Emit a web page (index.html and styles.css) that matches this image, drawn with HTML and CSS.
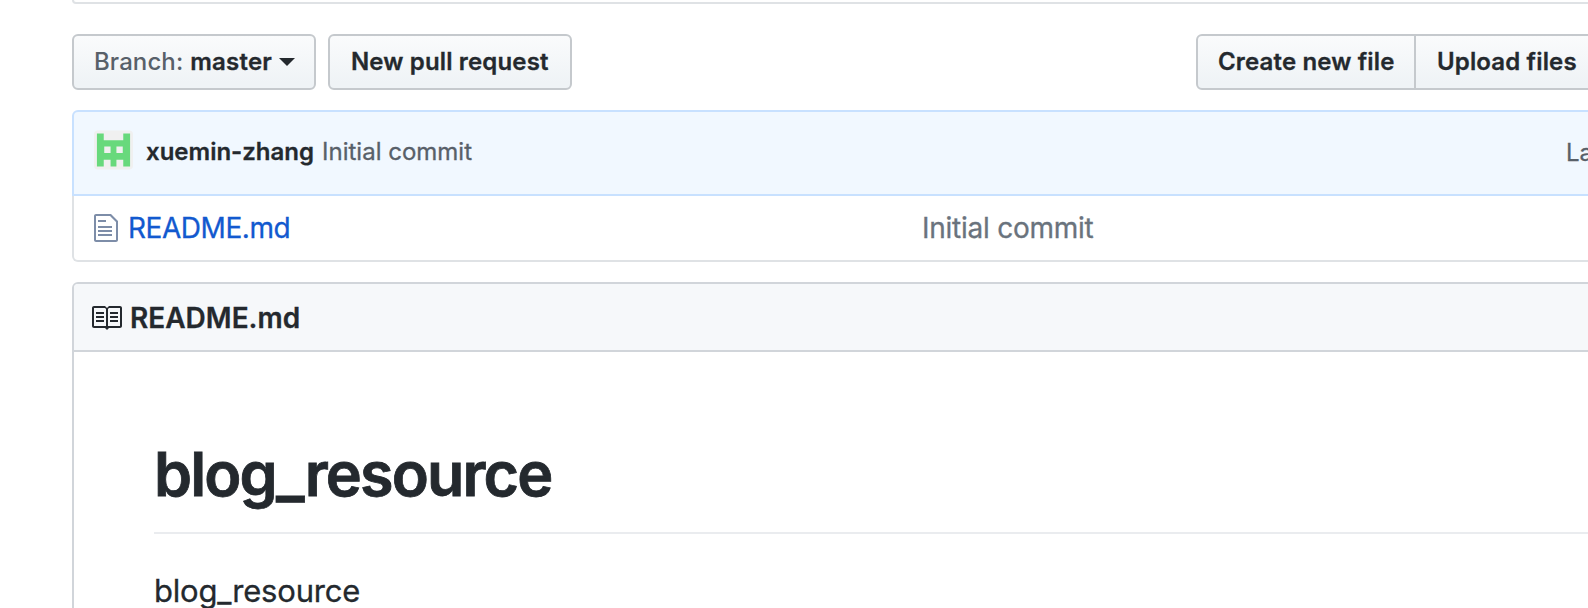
FILE: index.html
```html
<!DOCTYPE html>
<html lang="en">
<head>
<meta charset="utf-8">
<title>blog_resource</title>
<link rel="stylesheet" href="styles.css">
</head>
<body>
<main class="repo">
  <div class="summary"></div>
  <div class="toolbar">
    <button class="btn branch"><span class="label">Branch:</span><span class="name">master</span><span class="caret"></span></button>
    <button class="btn pull"><span>New pull request</span></button>
    <div class="group">
      <button class="btn create"><span>Create new file</span></button>
      <button class="btn upload"><span>Upload files</span></button>
    </div>
  </div>
  <section class="files">
    <div class="commit">
      <svg class="avatar" viewBox="0 0 40 40">
        <rect width="40" height="40" rx="4" fill="#f0f0f0"/>
        <path fill="#68d97c" fill-rule="evenodd" d="M3 3h7v7h20V3h7v34h-7v-7h-7v7h-6v-7h-7v7H3zM10.500 16.500v6.500h6.500v-6.500zM23 16.500v6.500h6.500v-6.500z"/>
      </svg>
      <span class="author">xuemin-zhang</span>
      <span class="message">Initial commit</span>
      <span class="latest">La</span>
    </div>
    <div class="file">
      <svg class="file-icon" viewBox="0 0 12 16"><path d="M6 5H2V4h4v1zM2 8h7V7H2v1zm0 2h7V9H2v1zm0 2h7v-1H2v1zm10-7.5V14c0 .55-.45 1-1 1H1c-.55 0-1-.45-1-1V2c0-.55.45-1 1-1h7.500L12 4.500zM11 5L8 2H1v12h10V5z"/></svg>
      <a class="file-name">README.md</a>
      <span class="file-message">Initial commit</span>
    </div>
  </section>
  <section class="readme">
    <div class="readme-head">
      <svg class="book-icon" viewBox="0 0 16 16"><path d="M3 5h4v1H3V5zm0 3h4V7H3v1zm0 2h4V9H3v1zm11-5h-4v1h4V5zm0 2h-4v1h4V7zm0 2h-4v1h4V9zm2-6v9c0 .55-.45 1-1 1H9.500l-1 1-1-1H2c-.55 0-1-.45-1-1V3c0-.55.45-1 1-1h5.500l1 1 1-1H15c.55 0 1 .45 1 1zm-8 .5L7.500 3H2v9h6V3.500zm7-.5H9.500l-.5.5V12h6V3z"/></svg>
      <span class="readme-name">README.md</span>
    </div>
    <article class="content">
      <h1>blog_resource</h1>
      <p>blog_resource</p>
    </article>
  </section>
</main>
</body>
</html>
```
FILE: styles.css
```css
* { box-sizing: border-box; }
html, body { height: 100%; overflow: hidden; }
body {
  margin: 0;
  background: #fff;
  color: #24292e;
  font-family: Inter, "Liberation Sans", sans-serif;
  font-size: 24px;
}
.repo { width: 2040px; padding-left: 72px; }
.summary {
  height: 4px;
  border: 2px solid #dfe2e5;
  border-top: 0;
  border-radius: 0 0 6px 6px;
}
.toolbar { display: flex; gap: 12px; height: 56px; margin-top: 30px; }
.btn {
  display: flex;
  align-items: center;
  height: 56px;
  padding: 0 0 0 20px;
  border: 2px solid #c5c9cd;
  border-radius: 6px;
  background: linear-gradient(#fafbfc, #eff3f6 90%);
  color: #24292e;
  font: 600 24px/36px Inter, "Liberation Sans", sans-serif;
  letter-spacing: 0.15px;
  white-space: nowrap;
  -webkit-text-stroke: 0.3px;
}
.branch { width: 244px; }
.label { color: #586069; font-weight: 500; letter-spacing: 0.1px; -webkit-text-stroke: 0; }
.name { margin-left: 7px; letter-spacing: 0.2px; }
.caret {
  margin: 0 0 0 7px;
  border: 8px solid transparent;
  border-top-color: #24292e;
  border-bottom: 0;
}
.pull { width: 244px; padding-left: 21px; }
.group { display: flex; margin-left: 612px; }
.create { width: 220px; border-radius: 6px 0 0 6px; }
.upload { width: 190px; margin-left: -2px; padding-left: 21px; border-radius: 0; }
.files { margin-top: 20px; }
.commit {
  display: flex;
  align-items: center;
  height: 86px;
  padding: 0 20px 6px;
  border: 2px solid #c8e1ff;
  border-radius: 6px 6px 0 0;
  background: #f1f8ff;
  line-height: 36px;
  white-space: nowrap;
}
.avatar { width: 39px; height: 40px; }
.author { margin: 3px 0 0 13px; font-weight: 600; -webkit-text-stroke: 0.3px; }
.message { margin: 3px 0 0 8px; color: #586069; -webkit-text-stroke: 0.3px; }
.latest { margin: 5px 0 0 1094px; color: #586069; -webkit-text-stroke: 0.3px; }
.file {
  display: flex;
  align-items: center;
  height: 66px;
  padding-left: 20px;
  border: 2px solid #dfe2e5;
  border-top: 0;
  border-radius: 0 0 6px 6px;
  font-size: 28px;
  line-height: 40px;
}
.file-icon { width: 24px; height: 32px; fill: #7d8da8; }
.file-name { width: 794px; margin-left: 10px; color: #1259cf; letter-spacing: -0.45px; -webkit-text-stroke: 0.3px; }
.file-message { color: #6a737d; letter-spacing: -0.25px; -webkit-text-stroke: 0.3px; }
.readme {
  height: 400px;
  margin-top: 20px;
  border: 2px solid #d1d5da;
  border-radius: 6px 6px 0 0;
}
.readme-head {
  display: flex;
  align-items: center;
  height: 68px;
  padding-left: 16px;
  border-bottom: 2px solid #d1d5da;
  border-radius: 4px 4px 0 0;
  background: #f6f8fa;
}
.book-icon { width: 32px; height: 32px; margin-top: 2px; fill: #24292e; }
.readme-name { margin: 2px 0 0 8px; font-size: 28px; font-weight: 600; line-height: 40px; -webkit-text-stroke: 0.3px; }
.content { padding: 82px 0 0 80px; }
.content h1 {
  height: 100px;
  margin: 0;
  border-bottom: 2px solid #eaecef;
  font-size: 61px;
  font-weight: 600;
  letter-spacing: -1.85px;
  line-height: 80px;
  -webkit-text-stroke: 0.8px;
}
.content p { margin: 33px 0 0; font-size: 31px; letter-spacing: -0.2px; line-height: 48px; -webkit-text-stroke: 0.3px; }
```
